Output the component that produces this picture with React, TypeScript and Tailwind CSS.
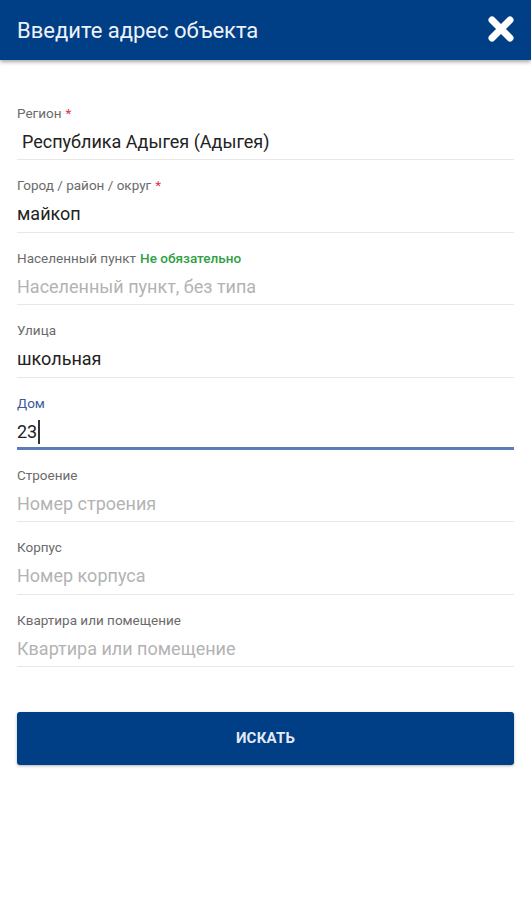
import React from "react";

type Field = {
  label: string;
  value?: string;
  placeholder?: string;
  required?: boolean;
  optional?: boolean;
  focused?: boolean;
  indent?: boolean;
};

const fields: Field[] = [
  { label: "Регион", value: "Республика Адыгея (Адыгея)", required: true, indent: true },
  { label: "Город / район / округ", value: "майкоп", required: true },
  { label: "Населенный пункт", placeholder: "Населенный пункт, без типа", optional: true },
  { label: "Улица", value: "школьная" },
  { label: "Дом", value: "23", focused: true },
  { label: "Строение", placeholder: "Номер строения" },
  { label: "Корпус", placeholder: "Номер корпуса" },
  { label: "Квартира или помещение", placeholder: "Квартира или помещение" },
];

function FieldRow({ f }: { f: Field }) {
  return (
    <div
      className={
        "flex h-[72.4px] flex-col pt-[16px] " +
        (f.focused ? "border-b-[3px] border-[#5b7db5]" : "border-b border-[#e8e8e8]")
      }
    >
      <div className="flex h-[18px] items-center text-[13.5px] leading-[18px]">
        <span className={f.focused ? "text-[#3b5b9c]" : "text-[#6b6b6b]"}>{f.label}</span>
        {f.required && <span className="ml-[4px] text-[#e0314b]">*</span>}
        {f.optional && (
          <span className="ml-[4px] font-medium text-[#2ea043]">Не обязательно</span>
        )}
      </div>
      <div
        className={
          "mt-[8px] flex h-[24px] items-center text-[18px] leading-[24px] " +
          (f.indent ? "pl-[5px] " : "") +
          (f.value ? "text-[#222222]" : "text-[#b3b3b3]")
        }
      >
        {f.value ?? f.placeholder}
        {f.focused && <span className="ml-[1px] inline-block h-[24px] w-[2px] bg-[#333]" />}
      </div>
    </div>
  );
}

export default function App() {
  return (
    <div
      className="min-h-[900px] w-[531px] bg-white"
      style={{ fontFamily: "Roboto, 'Noto Sans', sans-serif" }}
    >
      <div className="relative z-10 flex h-[60px] items-center justify-between bg-[#003e86] pl-[17px] pr-[16px] shadow-[0_2px_4px_rgba(0,0,0,0.35)]">
        <span className="text-[22px] font-normal text-[#eef2f8]">Введите адрес объекта</span>
        <svg width="28" height="28" viewBox="0 0 28 28" className="mt-[-2px]">
          <path
            d="M5 5 L23 23 M23 5 L5 23"
            stroke="#ffffff"
            strokeWidth="7"
            strokeLinecap="round"
          />
        </svg>
      </div>
      <div className="px-[17px] pt-[28px]">
        {fields.map((f) => (
          <FieldRow key={f.label} f={f} />
        ))}
        <button className="mt-[45px] flex h-[53px] w-full items-center justify-center rounded-[3px] bg-[#003e86] text-[15px] font-bold tracking-[0.2px] text-[#e4e9f3] shadow-[0_1px_3px_rgba(0,0,0,0.3)]">
          ИСКАТЬ
        </button>
      </div>
    </div>
  );
}
